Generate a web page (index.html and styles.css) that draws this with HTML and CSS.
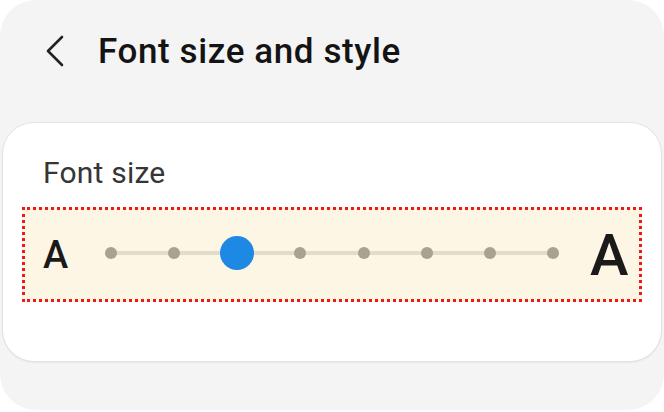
FILE: index.html
```html
<!DOCTYPE html>
<html lang="en">
<head>
<meta charset="utf-8">
<title>Font size and style</title>
<link rel="stylesheet" href="styles.css">
</head>
<body>
<div class="screen">
  <header class="appbar">
    <svg class="back" width="20" height="32" viewBox="0 0 20 32" aria-hidden="true">
      <path d="M17 2 L3 16 L17 30" fill="none" stroke="#222" stroke-width="2.6" stroke-linecap="round" stroke-linejoin="round"/>
    </svg>
    <h1 class="title">Font size and style</h1>
  </header>
  <section class="card">
    <div class="label">Font size</div>
    <div class="size-row">
      <span class="a-small">A</span>
      <div class="slider">
        <span class="stop"><i class="dot"></i></span>
        <span class="stop"><i class="dot"></i></span>
        <span class="stop"><i class="thumb"></i></span>
        <span class="stop"><i class="dot"></i></span>
        <span class="stop"><i class="dot"></i></span>
        <span class="stop"><i class="dot"></i></span>
        <span class="stop"><i class="dot"></i></span>
        <span class="stop"><i class="dot"></i></span>
      </div>
      <span class="a-big">A</span>
    </div>
  </section>
</div>
</body>
</html>
```
FILE: styles.css
```css
html, body {
  margin: 0;
  padding: 0;
  background: #ffffff;
}
body {
  font-family: Roboto, "Noto Sans", "Liberation Sans", sans-serif;
}
.screen {
  width: 664px;
  height: 410px;
  background: #f4f4f4;
  border-radius: 36px;
  box-sizing: border-box;
  padding: 0 2px;
  overflow: hidden;
}
.appbar {
  height: 122px;
  display: flex;
  align-items: center;
  padding-left: 43px;
  padding-bottom: 20px;
  box-sizing: border-box;
}
.back {
  display: block;
  margin-right: 33px;
}
.title {
  margin: 0;
  font-size: 35px;
  font-weight: 500;
  color: #141414;
  letter-spacing: 0.6px;
}
.card {
  background: #fff;
  border: 1px solid #e2e2e2;
  border-radius: 32px;
  height: 240px;
  box-sizing: border-box;
  padding: 32px 19px 0;
  box-shadow: 0 1px 1px rgba(0,0,0,0.05);
}
.label {
  font-size: 30px;
  color: #363636;
  line-height: 36px;
  padding-left: 21px;
  margin-bottom: 16px;
  letter-spacing: 0.2px;
}
.size-row {
  height: 95px;
  box-sizing: border-box;
  background: #fdf6e5;
  border: 3px dotted #ec1a1a;
  display: flex;
  align-items: center;
  padding: 0 11px 0 18px;
}
.a-small {
  font-size: 38px;
  font-weight: 500;
  color: #1a1a1a;
  line-height: 1;
  width: 26px;
}
.a-big {
  font-size: 58px;
  font-weight: 500;
  color: #1a1a1a;
  line-height: 1;
  width: 38px;
}
.slider {
  flex: 1;
  position: relative;
  display: flex;
  justify-content: space-between;
  align-items: center;
  height: 36px;
  margin: -4px 20px 0 25px;
}
.slider::before {
  content: "";
  position: absolute;
  left: 17px;
  right: 17px;
  top: 50%;
  height: 4px;
  margin-top: -2px;
  background: #e3dccb;
  border-radius: 2px;
}
.stop {
  position: relative;
  width: 34px;
  height: 34px;
  display: flex;
  align-items: center;
  justify-content: center;
}
.dot {
  width: 12px;
  height: 12px;
  border-radius: 50%;
  background: #a8a292;
}
.thumb {
  width: 34px;
  height: 34px;
  border-radius: 50%;
  background: #1e88e5;
}
```
